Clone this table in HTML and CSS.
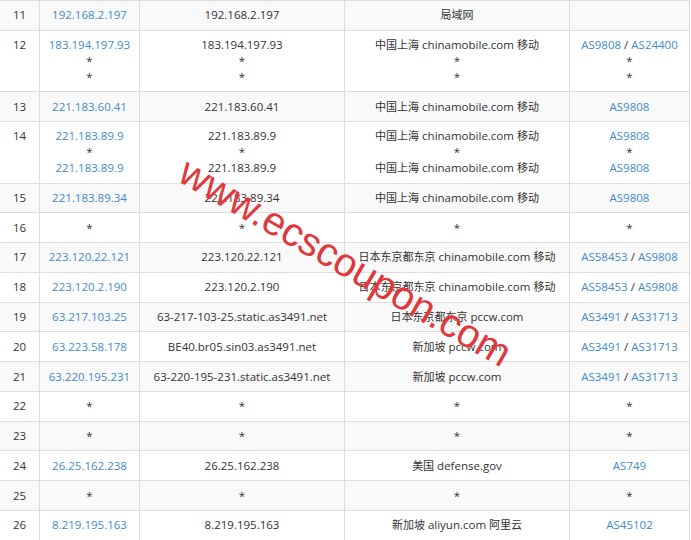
FILE: index.html
```html
<!DOCTYPE html>
<html lang="zh-CN">
<head>
<meta charset="utf-8">
<title>Traceroute</title>
<link rel="stylesheet" href="styles.css">
</head>
<body>
<div class="wrap">
<table class="trace">
<colgroup>
<col class="c-hop"><col class="c-ip"><col class="c-host"><col class="c-loc"><col class="c-as">
</colgroup>
<tbody>
<tr><td>11</td><td><a>192.168.2.197</a></td><td>192.168.2.197</td><td><span class="zh">局域网</span></td><td></td></tr>
<tr><td>12</td><td><a>183.194.197.93</a><br>*<br>*</td><td>183.194.197.93<br>*<br>*</td><td><span class="zh">中国上海</span> chinamobile.com <span class="zh">移动</span><br>*<br>*</td><td><a>AS9808</a> / <a>AS24400</a><br>*<br>*</td></tr>
<tr><td>13</td><td><a>221.183.60.41</a></td><td>221.183.60.41</td><td><span class="zh">中国上海</span> chinamobile.com <span class="zh">移动</span></td><td><a>AS9808</a></td></tr>
<tr><td>14</td><td><a>221.183.89.9</a><br>*<br><a>221.183.89.9</a></td><td>221.183.89.9<br>*<br>221.183.89.9</td><td><span class="zh">中国上海</span> chinamobile.com <span class="zh">移动</span><br>*<br><span class="zh">中国上海</span> chinamobile.com <span class="zh">移动</span></td><td><a>AS9808</a><br>*<br><a>AS9808</a></td></tr>
<tr><td>15</td><td><a>221.183.89.34</a></td><td>221.183.89.34</td><td><span class="zh">中国上海</span> chinamobile.com <span class="zh">移动</span></td><td><a>AS9808</a></td></tr>
<tr><td>16</td><td>*</td><td>*</td><td>*</td><td>*</td></tr>
<tr><td>17</td><td><a>223.120.22.121</a></td><td>223.120.22.121</td><td><span class="zh">日本东京都东京</span> chinamobile.com <span class="zh">移动</span></td><td><a>AS58453</a> / <a>AS9808</a></td></tr>
<tr><td>18</td><td><a>223.120.2.190</a></td><td>223.120.2.190</td><td><span class="zh">日本东京都东京</span> chinamobile.com <span class="zh">移动</span></td><td><a>AS58453</a> / <a>AS9808</a></td></tr>
<tr><td>19</td><td><a>63.217.103.25</a></td><td>63-217-103-25.static.as3491.net</td><td><span class="zh">日本东京都东京</span> pccw.com</td><td><a>AS3491</a> / <a>AS31713</a></td></tr>
<tr><td>20</td><td><a>63.223.58.178</a></td><td>BE40.br05.sin03.as3491.net</td><td><span class="zh">新加坡</span> pccw.com</td><td><a>AS3491</a> / <a>AS31713</a></td></tr>
<tr><td>21</td><td><a>63.220.195.231</a></td><td>63-220-195-231.static.as3491.net</td><td><span class="zh">新加坡</span> pccw.com</td><td><a>AS3491</a> / <a>AS31713</a></td></tr>
<tr><td>22</td><td>*</td><td>*</td><td>*</td><td>*</td></tr>
<tr><td>23</td><td>*</td><td>*</td><td>*</td><td>*</td></tr>
<tr><td>24</td><td><a>26.25.162.238</a></td><td>26.25.162.238</td><td><span class="zh">美国</span> defense.gov</td><td><a>AS749</a></td></tr>
<tr><td>25</td><td>*</td><td>*</td><td>*</td><td>*</td></tr>
<tr><td>26</td><td><a>8.219.195.163</a></td><td>8.219.195.163</td><td><span class="zh">新加坡</span> aliyun.com <span class="zh">阿里云</span></td><td><a>AS45102</a></td></tr>
</tbody>
</table>
<svg class="watermark" width="691" height="540" viewBox="0 0 691 540" aria-hidden="true">
<text x="176" y="180" transform="rotate(30 176 180)">www.ecscoupon.com</text>
</svg>
</div>
</body>
</html>
```
FILE: styles.css
```css
html, body {
  margin: 0;
  padding: 0;
  background: #ffffff;
}
.wrap {
  position: relative;
  width: 691px;
  height: 540px;
  overflow: hidden;
}
.trace {
  width: 690px;
  table-layout: fixed;
  border-collapse: separate;
  border-spacing: 0;
  border-top: 1px solid #dddddd;
  font-family: "Open Sans", "Noto Sans CJK SC", sans-serif;
  font-size: 11.5px;
  line-height: 15.86px;
  color: #333333;
}
.c-hop { width: 40px; }
.c-ip { width: 100px; }
.c-host { width: 205px; }
.c-loc { width: 225px; }
.c-as { width: 120px; }
.trace td {
  box-sizing: border-box;
  padding: 6.46px 0;
  text-align: center;
  vertical-align: top;
  border-right: 1px solid #dddddd;
  border-bottom: 1px solid #dddddd;
  white-space: nowrap;
}
.trace tr:nth-child(odd) td {
  background: #f9f9f9;
}
.trace a {
  color: #428bca;
  text-decoration: none;
}
.zh {
  font-family: "Noto Sans CJK SC", sans-serif;
  font-size: 11px;
}
.watermark {
  position: absolute;
  left: 0;
  top: 0;
  pointer-events: none;
}
.watermark text {
  font-family: "Liberation Sans", Arial, sans-serif;
  font-size: 40px;
  fill: #e0383c;
}
```
